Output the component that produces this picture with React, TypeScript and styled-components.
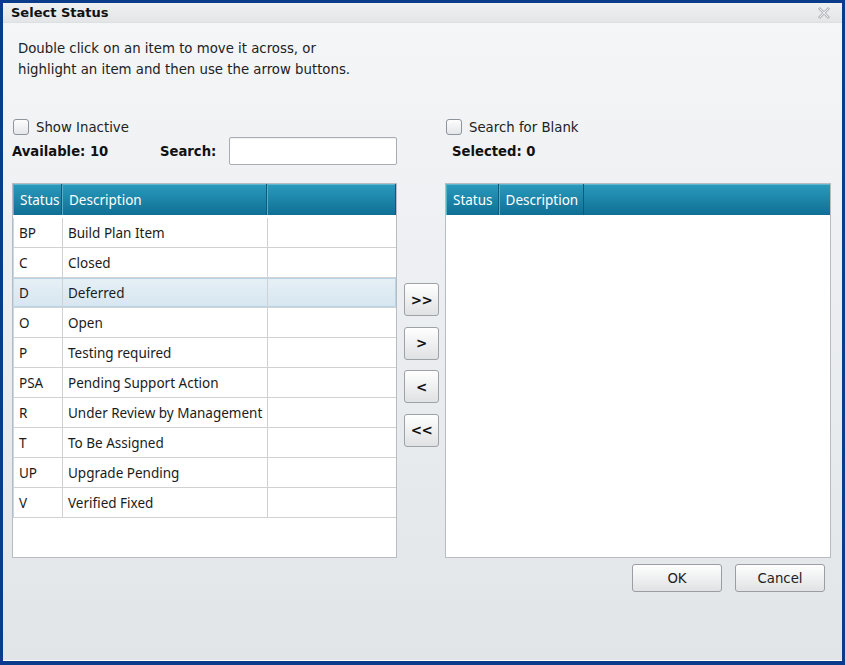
import React from 'react';
import styled, { createGlobalStyle } from 'styled-components';

const Global = createGlobalStyle`
  html, body { margin: 0; padding: 0; }
  body { width: 845px; height: 665px; overflow: hidden; background: #0b3b8b; }
`;

const Window = styled.div`
  width: 845px;
  height: 665px;
  box-sizing: border-box;
  border: 3px solid #0b3b8b;
  border-bottom-width: 4px;
  background: linear-gradient(#f4f6f8, #e2e5e8);
  box-shadow: inset 0 -1px 0 #ffffff;
  display: flex;
  flex-direction: column;
  font-family: "DejaVu Sans", Verdana, sans-serif;
  color: #1a1a1a;
`;

const TitleBar = styled.div`
  height: 19px;
  flex: 0 0 19px;
  display: flex;
  align-items: center;
  justify-content: space-between;
  padding: 0 12px 0 8px;
  background: linear-gradient(#eef0f2, #e3e5e7);
  border-bottom: 1px solid #dde0e3;
`;

const Title = styled.span`
  font-weight: bold;
  font-size: 13px;
  color: #111;
`;

const CloseIcon = () => (
  <svg width="12" height="12" viewBox="0 0 12 12">
    <path
      d="M0.6 1.9 L1.9 0.6 L6 4.7 L10.1 0.6 L11.4 1.9 L7.3 6 L11.4 10.1 L10.1 11.4 L6 7.3 L1.9 11.4 L0.6 10.1 L4.7 6 Z"
      fill="#eef0f2"
      stroke="#979ba0"
      strokeWidth="0.9"
      strokeLinejoin="round"
    />
  </svg>
);

const Body = styled.div`
  flex: 1;
  display: flex;
  flex-direction: column;
  padding: 15px 0 0 9px;
`;

const Instructions = styled.p`
  margin: 0 0 0 6px;
  font-size: 13.3px;
  line-height: 21px;
  color: #222;
`;

const Columns = styled.div`
  margin-top: 39px;
  display: grid;
  grid-template-columns: 385px 48px 386px;
  align-items: start;
`;

const Panel = styled.div`
  display: flex;
  flex-direction: column;
`;

const CheckRow = styled.label`
  height: 16px;
  display: flex;
  align-items: center;
  gap: 7px;
  padding-left: 1px;
  font-size: 13.3px;
  color: #222;
`;

const CheckBox = styled.span`
  width: 16px;
  height: 16px;
  box-sizing: border-box;
  border: 1px solid #8d949b;
  border-radius: 3px;
  background: linear-gradient(#fdfdfd, #e4e6e9);
`;

const StatsRow = styled.div<{ $indent?: number }>`
  margin-top: 2px;
  height: 28px;
  display: flex;
  align-items: center;
  padding-left: ${p => p.$indent ?? 0}px;
`;

const Stat = styled.span<{ $width?: number }>`
  font-weight: bold;
  font-size: 13.2px;
  color: #111;
  flex: ${p => (p.$width ? `0 0 ${p.$width}px` : '1')};
`;

const SearchInput = styled.input`
  width: 168px;
  height: 28px;
  box-sizing: border-box;
  border: 1px solid #a8adb3;
  border-radius: 2px;
  background: #fff;
  box-shadow: inset 0 1px 1px rgba(0, 0, 0, 0.06);
  outline: none;
`;

const Table = styled.div`
  margin-top: 18px;
  height: 375px;
  box-sizing: border-box;
  border: 1px solid #b6bcc2;
  background: #fff;
  display: flex;
  flex-direction: column;
  font-family: "Noto Sans", "Open Sans", sans-serif;
  font-size: 13.5px;
`;

const HeaderRow = styled.div`
  height: 31px;
  flex: 0 0 31px;
  display: flex;
  background: linear-gradient(#2a9bbd, #0f6f94);
  box-shadow: inset 0 1px 0 #5fb6d0;
`;

const HeaderCell = styled.div<{ $width?: number; $grow?: boolean }>`
  box-sizing: border-box;
  ${p => (p.$width ? `width: ${p.$width}px;` : '')}
  ${p => (p.$grow ? 'flex: 1;' : '')}
  display: flex;
  align-items: center;
  padding: 0 5px 0 6px;
  color: #fff;
  border-left: 1px solid #58aec9;
  border-right: 1px solid #0c5b7b;
  white-space: nowrap;
  overflow: hidden;
`;

const Rows = styled.div`
  padding-top: 3px;
`;

const Row = styled.div<{ $selected?: boolean }>`
  height: 30px;
  box-sizing: border-box;
  display: flex;
  border-bottom: 1px solid #cfd1d3;
  ${p =>
    p.$selected
      ? `background: linear-gradient(#e6f0f6, #d6e6f0);
         box-shadow: inset 0 0 0 1px #b8d4e6;`
      : ''}
`;

const Cell = styled.div<{ $width?: number }>`
  box-sizing: border-box;
  ${p => (p.$width ? `width: ${p.$width}px;` : 'flex: 1;')}
  display: flex;
  align-items: center;
  padding: 1px 5px 0;
  color: #1b1b1b;
  border-left: 1px solid #cfd1d3;
  white-space: nowrap;
  &:first-child { border-left-color: #c5d9e6; }
`;

const Mover = styled.div`
  display: flex;
  flex-direction: column;
  gap: 10.5px;
  padding: 164px 0 0 7px;
`;

const ArrowButton = styled.button`
  width: 35px;
  height: 33px;
  box-sizing: border-box;
  border: 1px solid #9da2a7;
  border-radius: 3px;
  background: linear-gradient(#ffffff, #dfe1e3);
  font-family: "DejaVu Sans", Verdana, sans-serif;
  font-weight: bold;
  font-size: 13.5px;
  color: #111;
  padding: 0;
  letter-spacing: -0.5px;
`;

const Footer = styled.div`
  display: flex;
  justify-content: flex-end;
  gap: 13px;
  margin-top: 6px;
  padding-right: 6px;
`;

const DialogButton = styled.button`
  width: 90px;
  height: 28px;
  box-sizing: border-box;
  border: 1px solid #9a9ea3;
  border-radius: 3px;
  background: linear-gradient(#fefefe, #e0e2e4);
  font-family: "DejaVu Sans", Verdana, sans-serif;
  font-size: 13.3px;
  color: #222;
  padding: 0;
`;

const statuses: [string, string][] = [
  ['BP', 'Build Plan Item'],
  ['C', 'Closed'],
  ['D', 'Deferred'],
  ['O', 'Open'],
  ['P', 'Testing required'],
  ['PSA', 'Pending Support Action'],
  ['R', 'Under Review by Management'],
  ['T', 'To Be Assigned'],
  ['UP', 'Upgrade Pending'],
  ['V', 'Verified Fixed'],
];

export default function App() {
  return (
    <>
      <Global />
      <Window>
        <TitleBar>
          <Title>Select Status</Title>
          <CloseIcon />
        </TitleBar>
        <Body>
          <Instructions>
            Double click on an item to move it across, or
            <br />
            highlight an item and then use the arrow buttons.
          </Instructions>
          <Columns>
            <Panel>
              <CheckRow>
                <CheckBox />
                Show Inactive
              </CheckRow>
              <StatsRow>
                <Stat $width={148}>Available: 10</Stat>
                <Stat>Search:</Stat>
                <SearchInput />
              </StatsRow>
              <Table>
                <HeaderRow>
                  <HeaderCell $width={49}>Status</HeaderCell>
                  <HeaderCell $width={205}>Description</HeaderCell>
                  <HeaderCell $grow />
                </HeaderRow>
                <Rows>
                  {statuses.map(([code, desc]) => (
                    <Row key={code} $selected={code === 'D'}>
                      <Cell $width={49}>{code}</Cell>
                      <Cell $width={205}>{desc}</Cell>
                      <Cell />
                    </Row>
                  ))}
                </Rows>
              </Table>
            </Panel>
            <Mover>
              <ArrowButton>&gt;&gt;</ArrowButton>
              <ArrowButton>&gt;</ArrowButton>
              <ArrowButton>&lt;</ArrowButton>
              <ArrowButton>&lt;&lt;</ArrowButton>
            </Mover>
            <Panel>
              <CheckRow>
                <CheckBox />
                Search for Blank
              </CheckRow>
              <StatsRow $indent={7}>
                <Stat>Selected: 0</Stat>
              </StatsRow>
              <Table>
                <HeaderRow>
                  <HeaderCell>Status</HeaderCell>
                  <HeaderCell>Description</HeaderCell>
                </HeaderRow>
              </Table>
              <Footer>
                <DialogButton>OK</DialogButton>
                <DialogButton>Cancel</DialogButton>
              </Footer>
            </Panel>
          </Columns>
        </Body>
      </Window>
    </>
  );
}
